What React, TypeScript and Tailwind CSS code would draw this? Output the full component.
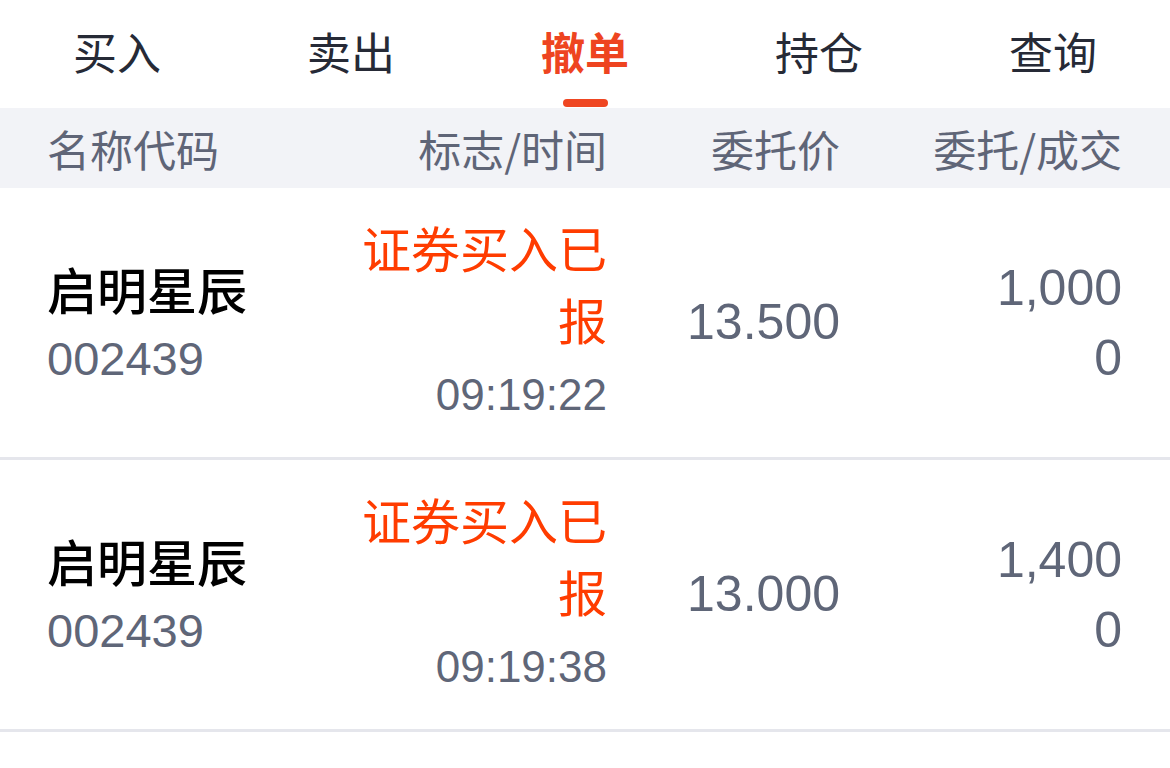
import React from "react";

const tabs = ["买入", "卖出", "撤单", "持仓", "查询"];

const orders = [
  { name: "启明星辰", code: "002439", status: "证券买入已报", time: "09:19:22", price: "13.500", qty: "1,000", filled: "0" },
  { name: "启明星辰", code: "002439", status: "证券买入已报", time: "09:19:38", price: "13.000", qty: "1,400", filled: "0" },
];

const font = { fontFamily: '"Liberation Sans", "Noto Sans CJK SC", sans-serif' };
const cjkFont = { fontFamily: '"Noto Sans CJK SC", "Liberation Sans", sans-serif' };

export default function App() {
  const active = 2;

  return (
    <div className="w-[1170px] h-[768px] bg-white overflow-hidden" style={font}>
      {/* Tabs */}
      <div className="flex h-[108px]">
        {tabs.map((t, i) => (
          <div key={t} className="flex-1 flex flex-col items-center pt-[25px]">
            <span
              className={
                i === active
                  ? "text-[44px] leading-[60px] font-bold text-[#ee4420]"
                  : "text-[44px] leading-[60px] text-[#262a36]"
              }
            >
              {t}
            </span>
            <div
              className={
                i === active
                  ? "mt-[14px] w-[45px] h-[8px] rounded-full bg-[#ef4622]"
                  : "mt-[14px] w-[45px] h-[8px]"
              }
            />
          </div>
        ))}
      </div>

      {/* Header */}
      <div
        className="grid grid-cols-[310px_250px_233px_282px] items-center h-[80px] pl-[47px] pr-[48px] bg-[#f2f3f7] text-[43px] text-[#5f6577]"
        style={cjkFont}
      >
        <div>名称代码</div>
        <div className="text-right">标志/时间</div>
        <div className="text-right">委托价</div>
        <div className="text-right">委托/成交</div>
      </div>

      {/* Rows */}
      {orders.map((o, i) => (
        <div
          key={i}
          className="grid grid-cols-[310px_250px_233px_282px] items-center h-[272px] pl-[47px] pr-[47px] border-b-[3px] border-[#e5e6ec]"
        >
          <div className="flex flex-col pt-[6px]">
            <span className="text-[50px] leading-[66px] font-medium text-black">{o.name}</span>
            <span className="text-[47px] leading-[66px] text-[#5f6678]">{o.code}</span>
          </div>
          <div className="flex flex-col items-end text-right">
            <span className="text-[49px] leading-[72px] text-[#ff3c00]">{o.status}</span>
            <span className="text-[44px] leading-[72px] text-[#5f6678]">{o.time}</span>
          </div>
          <div className="text-right text-[50px] text-[#5f6678]">{o.price}</div>
          <div className="flex flex-col items-end">
            <span className="text-[50px] leading-[70px] text-[#5f6678]">{o.qty}</span>
            <span className="text-[50px] leading-[70px] text-[#5f6678]">{o.filled}</span>
          </div>
        </div>
      ))}
    </div>
  );
}
